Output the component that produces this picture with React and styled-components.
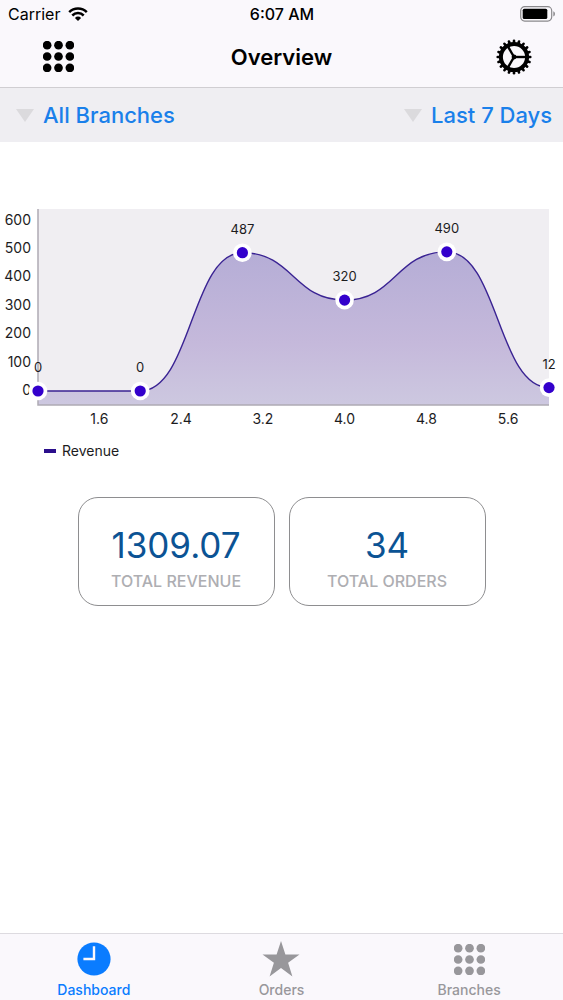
import React from "react";
import { useState } from "react";
import styled, { createGlobalStyle } from "styled-components";

const GlobalStyle = createGlobalStyle`
  *{
    box-sizing: border-box;
  }
  body{
    margin: 0;
    background: #ffffff;
    color: #000000;
    font-family: Inter, "Liberation Sans", sans-serif;
  }
  button, select{
    margin: 0;
    padding: 0;
    border: none;
    background: none;
    color: inherit;
    font: inherit;
    cursor: pointer;
  }
  svg{
    display: block;
  }
`;
const Page = styled.div`
  min-height: 100vh;
  display: flex;
  flex-flow: column;
`;
const Top = styled.header`
  background: #faf8fc;
  border-bottom: 1px solid #d0ced2;
`;
const StatusBar = styled.div`
  height: 28px;
  padding: 0 7px 0 8px;
  display: grid;
  grid-template-columns: 1fr auto 1fr;
  align-items: center;
  font-size: 16px;
`;
const Carrier = styled.div`
  display: flex;
  align-items: center;
  gap: 8px;
`;
const Time = styled.div`
  font-weight: 500;
`;
const Battery = styled.div`
  justify-self: end;
`;
const NavBar = styled.div`
  height: 59px;
  padding: 0 31px 2px 40px;
  display: flex;
  align-items: center;
  justify-content: space-between;
`;
const NavButton = styled.button`
  width: 36px;
  height: 36px;
  display: flex;
  align-items: center;
  justify-content: center;
`;
const Title = styled.h1`
  flex: 1;
  margin: 0;
  padding-right: 9px;
  font-size: 22px;
  font-weight: 600;
  text-align: center;
`;
const Filters = styled.div`
  height: 54px;
  padding: 0 10px 0 15px;
  display: flex;
  align-items: center;
  justify-content: space-between;
  background: #efeef2;
`;
const Filter = styled.label`
  display: flex;
  align-items: center;
  gap: 8px;
`;
const Select = styled.select`
  appearance: none;
  color: #1a80ea;
  font-size: 22px;
  font-weight: 500;
  line-height: 28px;
`;
const Content = styled.main`
  flex: 1;
  padding-top: 58px;
`;
const ChartSvg = styled.svg`
  width: 100%;
  height: auto;
  overflow: visible;
  font-size: 14px;
  fill: #1c1c1e;
`;
const Stats = styled.div`
  margin-top: 27px;
  padding: 0 16px;
  display: flex;
  justify-content: center;
  gap: 14px;
`;
const StatCard = styled.section`
  width: 197px;
  padding: 24px 0 12px;
  border: 1px solid #8e8e90;
  border-radius: 20px;
  text-align: center;
`;
const StatValue = styled.div`
  color: #0b5394;
  font-size: 35px;
  line-height: 46px;
`;
const StatLabel = styled.h2`
  margin: 0;
  padding-top: 1px;
  color: #aeaeb2;
  font-size: 16px;
  font-weight: 500;
  line-height: 24px;
`;
const TabBar = styled.nav`
  height: 67px;
  display: grid;
  grid-template-columns: repeat(3, 1fr);
  background: #faf8fc;
  border-top: 1px solid #dddbe0;
`;
const Tab = styled.button`
  padding-top: 7px;
  display: flex;
  flex-flow: column;
  align-items: center;
  gap: 5px;
  color: ${({$active}) => $active ? "#0a7cff" : "#98979b"};
  font-size: 14px;
  font-weight: 500;
  line-height: 16px;
`;
const TabIcon = styled.span`
  height: 36px;
  display: flex;
  align-items: center;
`;

const plot = {left: 38, right: 549, top: 9, bottom: 205};
const revenue = [0, 0, 487, 320, 490, 12];
const xTicks = [1.6, 2.4, 3.2, 4.0, 4.8, 5.6];
const yTicks = [600, 500, 400, 300, 200, 100, 0];

const xPos = (value) => plot.left + (value - 1) * (plot.right - plot.left) / 5;
const yPos = (value) => 191 - value * 0.284;

function DotsIcon() {
  const steps = [4, 15, 26];
  return(
    <svg width="31" height="31" viewBox="0 0 30 30" fill="currentColor" aria-hidden="true">
      {steps.map((y) => steps.map((x) => <circle key={`${x}-${y}`} cx={x} cy={y} r="4.2" />))}
    </svg>
  );
}

function GearIcon() {
  const teeth = Array.from({length: 20}, (_, i) => i * 18);
  return(
    <svg width="36" height="36" viewBox="-18 -18 36 36" fill="none" stroke="currentColor" aria-hidden="true">
      <circle r="13.1" strokeWidth="4" />
      {teeth.map((angle) => (
        <path key={angle} d="M14 0H16.3" strokeWidth="2.6" strokeLinecap="round" transform={`rotate(${angle})`} />
      ))}
      {[0, 120, 240].map((angle) => (
        <path key={angle} d="M0 0H12" strokeWidth="2.4" transform={`rotate(${angle})`} />
      ))}
      <circle r="2.4" fill="currentColor" stroke="none" />
    </svg>
  );
}

function WifiIcon() {
  return(
    <svg width="20" height="15" viewBox="0 0 20 15" fill="none" stroke="currentColor" strokeWidth="2.5" aria-hidden="true">
      <path d="M1.2 5.2A12.4 12.4 0 0 1 18.8 5.2" />
      <path d="M4.3 8.5A8 8 0 0 1 15.7 8.5" />
      <path d="M10 14L6.9 10.9A4.4 4.4 0 0 1 13.1 10.9Z" fill="currentColor" stroke="none" />
    </svg>
  );
}

function BatteryIcon() {
  return(
    <svg width="36" height="16" viewBox="0 0 36 16" aria-hidden="true">
      <rect x="0.7" y="0.7" width="31" height="14.4" rx="4" fill="none" stroke="#8a898c" strokeWidth="1.2" />
      <rect x="2.7" y="2.7" width="24.6" height="10.4" rx="1.6" fill="#000000" />
      <path d="M33.3 5.3C35.5 6 35.5 9.8 33.3 10.5Z" fill="#8a898c" />
    </svg>
  );
}

function ArrowIcon() {
  return(
    <svg width="20" height="14" viewBox="0 0 20 14" aria-hidden="true">
      <path d="M1 1H19L10 14Z" fill="#dbdadd" />
    </svg>
  );
}

function ClockIcon() {
  return(
    <svg width="34" height="36" viewBox="0 0 34 36" aria-hidden="true">
      <circle cx="17" cy="18" r="16.6" fill="currentColor" />
      <path d="M17 5.2V18H6.4" fill="none" stroke="#faf8fc" strokeWidth="2.4" />
    </svg>
  );
}

function StarIcon() {
  return(
    <svg width="38" height="36" viewBox="0 0 38 36" fill="currentColor" aria-hidden="true">
      <path d="M19 0L23.4 13.4H37.5L26.1 21.8L30.4 35.4L19 27.1L7.6 35.4L11.9 21.8L0.5 13.4H14.6Z" />
    </svg>
  );
}

function RevenueChart() {
  const points = revenue.map((value, i) => ({value, x: xPos(i + 1), y: yPos(value)}));
  const line = points.reduce((path, point, i) => {
    if(i === 0){
      return `M${point.x} ${point.y}`;
    }
    const prev = points[i - 1];
    const middle = (prev.x + point.x) / 2;
    return `${path}C${middle} ${prev.y} ${middle} ${point.y} ${point.x} ${point.y}`;
  }, "");

  return(
    <ChartSvg viewBox="0 0 563 270" role="img" aria-label="Revenue chart">
      <defs>
        <linearGradient id="area" x1="0" y1="0" x2="0" y2="1">
          <stop offset="0" stopColor="#b5add6" />
          <stop offset="0.6" stopColor="#c5b9db" />
          <stop offset="1" stopColor="#cdc8e0" />
        </linearGradient>
      </defs>
      <rect x={plot.left} y={plot.top} width={plot.right - plot.left} height={plot.bottom - plot.top} fill="#f0eef2" />
      <path d={`${line}V${plot.bottom}H${plot.left}Z`} fill="url(#area)" />
      <path d={`M${plot.left} ${plot.top}V${plot.bottom}H${plot.right}`} fill="none" stroke="#aeabb4" strokeWidth="1.5" />
      <path d={line} fill="none" stroke="#3a2393" strokeWidth="1.4" />
      {yTicks.map((tick) => (
        <text key={tick} x="31" y={yPos(tick) + 4} textAnchor="end">{tick}</text>
      ))}
      {xTicks.map((tick) => (
        <text key={tick} x={xPos(tick)} y="224" textAnchor="middle">{tick.toFixed(1)}</text>
      ))}
      {points.map(({value, x, y}) => (
        <g key={x}>
          <circle cx={x} cy={y} r="9.3" fill="#ffffff" />
          <circle cx={x} cy={y} r="5.6" fill="#3300cc" />
          <text x={x} y={y - 19} textAnchor="middle" fontSize="13">{value}</text>
        </g>
      ))}
      <rect x="44" y="249" width="12" height="4" fill="#2b0f8c" />
      <text x="62" y="256">Revenue</text>
    </ChartSvg>
  );
}

const tabs = [
  {name: "Dashboard", icon: <ClockIcon />},
  {name: "Orders", icon: <StarIcon />},
  {name: "Branches", icon: <DotsIcon />},
];

function App() {
  const [activeTab, setActiveTab] = useState("Dashboard");

  return(
    <Page>
      <GlobalStyle />
      <Top>
        <StatusBar>
          <Carrier>Carrier <WifiIcon /></Carrier>
          <Time>6:07 AM</Time>
          <Battery><BatteryIcon /></Battery>
        </StatusBar>
        <NavBar>
          <NavButton type="button" aria-label="Menu"><DotsIcon /></NavButton>
          <Title>Overview</Title>
          <NavButton type="button" aria-label="Settings"><GearIcon /></NavButton>
        </NavBar>
      </Top>
      <Filters>
        <Filter>
          <ArrowIcon />
          <Select aria-label="Branch">
            <option>All Branches</option>
          </Select>
        </Filter>
        <Filter>
          <ArrowIcon />
          <Select aria-label="Period">
            <option>Last 7 Days</option>
          </Select>
        </Filter>
      </Filters>
      <Content>
        <RevenueChart />
        <Stats>
          <StatCard>
            <StatValue>1309.07</StatValue>
            <StatLabel>TOTAL REVENUE</StatLabel>
          </StatCard>
          <StatCard>
            <StatValue>34</StatValue>
            <StatLabel>TOTAL ORDERS</StatLabel>
          </StatCard>
        </Stats>
      </Content>
      <TabBar>
        {tabs.map(({name, icon}) => (
          <Tab key={name} type="button" $active={name === activeTab} onClick={() => setActiveTab(name)}>
            <TabIcon>{icon}</TabIcon>
            {name}
          </Tab>
        ))}
      </TabBar>
    </Page>
  );
}

export default App;
